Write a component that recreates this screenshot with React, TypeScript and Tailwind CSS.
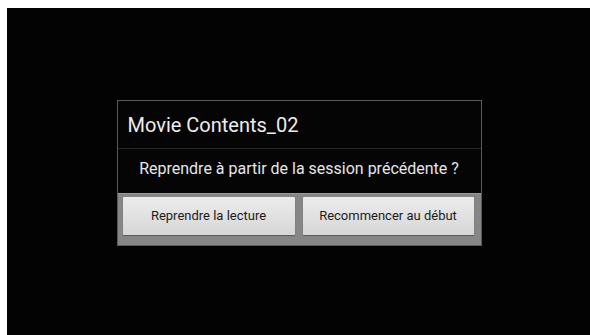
import React from 'react';

function DialogButton({ label, width }: { label: string; width: string }) {
  return (
    <button
      className={`${width} h-[38px] rounded-[1px] bg-gradient-to-b from-[#ececec] to-[#d6d6d6] text-[13px] text-[#1c1c1c] shadow-[0_1px_1px_rgba(0,0,0,0.35)]`}
    >
      {label}
    </button>
  );
}

export default function App() {
  return (
    <div
      className="flex h-[335px] w-[590px] bg-white pl-[7px] pt-[8px]"
      style={{ fontFamily: 'Roboto, "Noto Sans", sans-serif' }}
    >
      <div className="flex flex-1 items-center justify-center bg-[#030303] pl-[1px] pt-[2px]">
        {/* ── Resume dialog ───────────────────────── */}
        <div className="flex w-[365px] flex-col border border-[#5a5a5a] bg-[#050505]">
          <div className="flex h-[47px] items-center px-[10px] pt-[2px]">
            <h1 className="text-[20px] leading-none text-[#ececec]">Movie Contents_02</h1>
          </div>
          <div className="border-t border-[#262626]" />
          <div className="flex h-[44px] items-center justify-center pb-[3px]">
            <p className="text-[16px] leading-none text-[#e6e6e6]">
              Reprendre à partir de la session précédente ?
            </p>
          </div>
          <div className="flex gap-[8px] bg-[#868686] px-[5px] pb-[10px] pt-[4px] shadow-[inset_0_1px_0_#9a9a9a]">
            <DialogButton label="Reprendre la lecture" width="w-[172px]" />
            <DialogButton label="Recommencer au début" width="w-[171px]" />
          </div>
        </div>
      </div>
    </div>
  );
}
